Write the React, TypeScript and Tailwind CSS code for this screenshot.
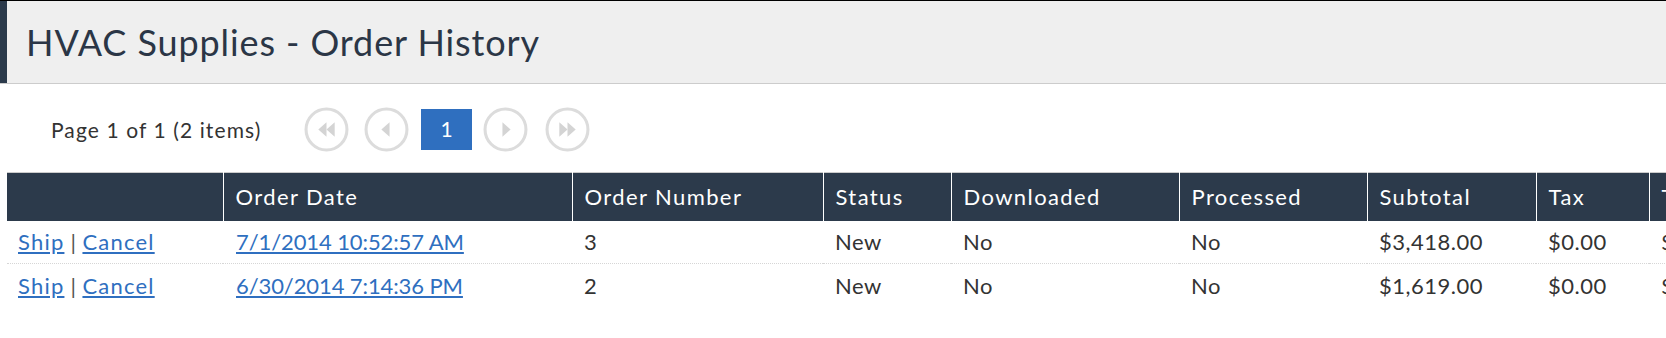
import React from "react";

const font = { fontFamily: "Lato, 'Open Sans', sans-serif" };

function PagerCircle({ kind, className }: { kind: "first" | "prev" | "next" | "last"; className?: string }) {
  const tri = (dir: "l" | "r", cx: number) =>
    dir === "l"
      ? `M${cx + 4} 15 L${cx - 4} 22 L${cx + 4} 29 Z`
      : `M${cx - 4} 15 L${cx + 4} 22 L${cx - 4} 29 Z`;
  let paths: string[] = [];
  if (kind === "first") paths = [tri("l", 18), tri("l", 26)];
  if (kind === "prev") paths = [tri("l", 21)];
  if (kind === "next") paths = [tri("r", 23)];
  if (kind === "last") paths = [tri("r", 18), tri("r", 26)];
  return (
    <svg width="45" height="45" viewBox="0 0 44 44" className={`block ${className ?? ""}`}>
      <circle cx="22" cy="22" r="20" fill="white" stroke="#dcdcdc" strokeWidth="3" />
      {paths.map((d, i) => (
        <path key={i} d={d} fill="#d4d4d4" />
      ))}
    </svg>
  );
}

const cols = [
  { label: "", w: 216 },
  { label: "Order Date", w: 349 },
  { label: "Order Number", w: 251 },
  { label: "Status", w: 128 },
  { label: "Downloaded", w: 228 },
  { label: "Processed", w: 188 },
  { label: "Subtotal", w: 169 },
  { label: "Tax", w: 113 },
  { label: "Total", w: 200 },
];

const rows = [
  { date: "7/1/2014 10:52:57 AM", num: "3", status: "New", dl: "No", pr: "No", sub: "$3,418.00", tax: "$0.00", total: "$3,418.00" },
  { date: "6/30/2014 7:14:36 PM", num: "2", status: "New", dl: "No", pr: "No", sub: "$1,619.00", tax: "$0.00", total: "$1,619.00" },
];

export default function App() {
  return (
    <div className="w-[1666px] h-[338px] bg-white overflow-hidden" style={font}>
      <div className="border-t border-black">
        <div className="flex h-[83px] bg-[#efefef] border-b border-[#cccccc]">
          <div className="w-[7px] bg-[#2b3a4b]" />
          <h1 className="pl-[19px] pt-[21px] text-[36px] leading-[40px] tracking-[0.9px] text-[#2b3646] font-normal">
            HVAC Supplies - Order History
          </h1>
        </div>
      </div>

      <div className="flex items-center h-[88px] pl-[51px]">
        <span className="text-[21px] tracking-[1.1px] text-[#333333] w-[253px] mt-[4px]">Page 1 of 1 (2 items)</span>
        <div className="flex items-center mt-[2px]">
          <PagerCircle kind="first" />
          <PagerCircle kind="prev" className="ml-[15px]" />
          <div className="ml-[12px] w-[51px] h-[41px] bg-[#2f6fbf] text-white text-[21px] flex items-center justify-center">1</div>
          <PagerCircle kind="next" className="ml-[11px]" />
          <PagerCircle kind="last" className="ml-[17px]" />
        </div>
      </div>

      <div className="pl-[7px] overflow-hidden">
        <table className="table-fixed border-collapse w-[1842px] border-t border-[#cccccc]">
          <colgroup>
            {cols.map((c, i) => (
              <col key={i} style={{ width: c.w }} />
            ))}
          </colgroup>
          <thead>
            <tr className="bg-[#2c3a4b] h-[48px]">
              {cols.map((c, i) => (
                <th
                  key={i}
                  className={`text-left font-normal text-white text-[22px] tracking-[1.4px] pl-[12px] ${i > 0 ? "border-l border-white" : ""}`}
                >
                  {c.label}
                </th>
              ))}
            </tr>
          </thead>
          <tbody className="text-[22px] tracking-[0.5px] text-[#333333]">
            {rows.map((r, i) => (
              <tr key={i} className={`h-[43px] ${i === 0 ? "border-b border-dotted border-[#d6d6d6]" : ""}`}>
                <td className="pl-[11px]">
                  <a className="text-[#2f6fc0] underline underline-offset-2 tracking-[1.2px]" href="#">Ship</a>
                  <span className="text-[#555555] px-[6px]">|</span>
                  <a className="text-[#2f6fc0] underline underline-offset-2 tracking-[1.2px]" href="#">Cancel</a>
                </td>
                <td className="pl-[13px]">
                  <a className="text-[#2f6fc0] underline underline-offset-2 tracking-[-0.1px]" href="#">{r.date}</a>
                </td>
                <td className="pl-[12px]">{r.num}</td>
                <td className="pl-[12px]">{r.status}</td>
                <td className="pl-[12px]">{r.dl}</td>
                <td className="pl-[12px]">{r.pr}</td>
                <td className="pl-[12px]">{r.sub}</td>
                <td className="pl-[12px]">{r.tax}</td>
                <td className="pl-[12px]">{r.total}</td>
              </tr>
            ))}
          </tbody>
        </table>
      </div>
    </div>
  );
}
